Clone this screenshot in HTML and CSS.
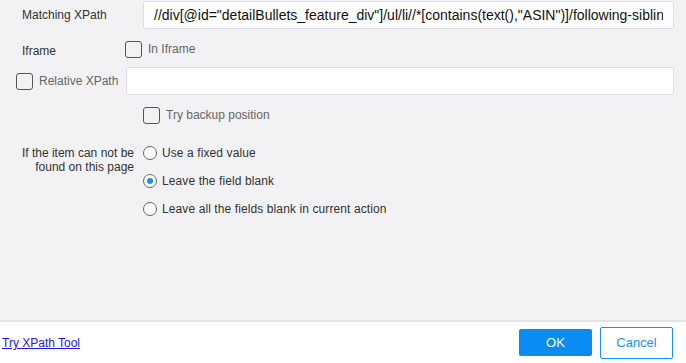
FILE: index.html
```html
<!DOCTYPE html>
<html lang="en">
<head>
  <meta charset="UTF-8">
  <title>Extract Settings</title>
  <link rel="stylesheet" href="styles.css">
</head>
<body>
  <div class="panel">
    <div class="row row-xpath">
      <label class="field-label" for="xpath">Matching XPath</label>
      <input class="text-input xpath-input" id="xpath" type="text" value='//div[@id="detailBullets_feature_div"]/ul/li//*[contains(text(),"ASIN")]/following-sibling::span'>
    </div>

    <div class="row row-iframe">
      <span class="field-label iframe-label">Iframe</span>
      <label class="check"><span class="box"></span>In Iframe</label>
    </div>

    <div class="row row-relative">
      <label class="check relative-check"><span class="box"></span>Relative XPath</label>
      <input class="text-input relative-input" type="text">
    </div>

    <div class="row row-backup">
      <label class="check"><span class="box"></span>Try backup position</label>
    </div>

    <div class="row row-missing">
      <div class="missing-label">If the item can not be<br>found on this page</div>
      <div class="radio-list">
        <label class="radio"><span class="dot"></span>Use a fixed value</label>
        <label class="radio checked"><span class="dot"></span>Leave the field blank</label>
        <label class="radio"><span class="dot"></span>Leave all the fields blank in current action</label>
      </div>
    </div>
  </div>

  <footer class="footer">
    <a href="#" class="tool-link">Try XPath Tool</a>
    <div class="actions">
      <button class="btn btn-ok">OK</button>
      <button class="btn btn-cancel">Cancel</button>
    </div>
  </footer>
</body>
</html>
```

FILE: styles.css
```css
html, body {
  margin: 0;
  height: 100%;
}

body {
  font-family: "Liberation Sans", Arial, sans-serif;
  font-size: 12px;
  color: #333;
  background-color: #f2f2f4;
  display: flex;
  flex-direction: column;
}

.panel {
  height: 320px;
  padding-top: 1px;
  box-sizing: border-box;
}

.row {
  display: flex;
  align-items: center;
}

.field-label {
  color: #333;
}

.row-xpath {
  height: 28px;
  padding-left: 22px;
  padding-right: 12px;
}

.row-xpath .field-label {
  width: 121px;
  margin-top: -1px;
}

.text-input {
  box-sizing: border-box;
  height: 28px;
  border: 1px solid #dcdcee;
  background: #fff;
  border-radius: 2px;
  font-family: "Liberation Sans", Arial, sans-serif;
  outline: none;
}

.xpath-input {
  flex: 1;
  padding: 0 10px;
  font-size: 14px;
  color: #111;
}

.row-iframe {
  margin-top: 11px;
  height: 18px;
  padding-left: 22px;
}

.iframe-label {
  width: 103px;
  margin-top: 3px;
}

.check {
  display: flex;
  align-items: center;
  color: #666;
}

.box {
  width: 15px;
  height: 15px;
  border: 1px solid #555;
  border-radius: 3px;
  margin-right: 6px;
}

.row-relative {
  margin-top: 9px;
  height: 28px;
  padding-left: 16px;
  padding-right: 12px;
}

.relative-check {
  width: 110px;
}

.relative-input {
  flex: 1;
  height: 28px;
}

.row-backup {
  margin-top: 11px;
  height: 18px;
  padding-left: 143px;
}

.row-missing {
  margin-top: 21px;
  align-items: flex-start;
}

.missing-label {
  width: 134px;
  text-align: right;
  line-height: 14px;
  margin-right: 9px;
  margin-top: 1px;
}

.radio-list {
  display: flex;
  flex-direction: column;
  gap: 12px;
}

.radio {
  display: flex;
  align-items: center;
  height: 16px;
  color: #333;
  letter-spacing: 0.1px;
}

.dot {
  box-sizing: border-box;
  width: 14px;
  height: 14px;
  border: 1px solid #666;
  border-radius: 50%;
  background: #fff;
  margin-right: 5px;
  display: flex;
  align-items: center;
  justify-content: center;
}

.radio.checked .dot::after {
  content: "";
  width: 6px;
  height: 6px;
  border-radius: 50%;
  background: #1890ff;
}

.footer {
  flex: 1;
  background: #fff;
  border-top: 2px solid #e4e4e8;
  display: flex;
  align-items: center;
  justify-content: space-between;
  padding: 0 13px 0 2px;
}

.tool-link {
  color: #2a14f0;
  text-decoration: underline;
  margin-top: 1px;
}

.actions {
  display: flex;
  align-items: center;
  gap: 8px;
}

.btn {
  font-family: "Liberation Sans", Arial, sans-serif;
  font-size: 13px;
  box-sizing: border-box;
  border-radius: 2px;
  cursor: pointer;
}

.btn-ok {
  width: 73px;
  height: 27px;
  background: #0a8cf5;
  color: #fff;
  border: none;
}

.btn-cancel {
  width: 73px;
  height: 32px;
  background: #fff;
  color: #1890ff;
  border: 1px solid #1890ff;
}
```
